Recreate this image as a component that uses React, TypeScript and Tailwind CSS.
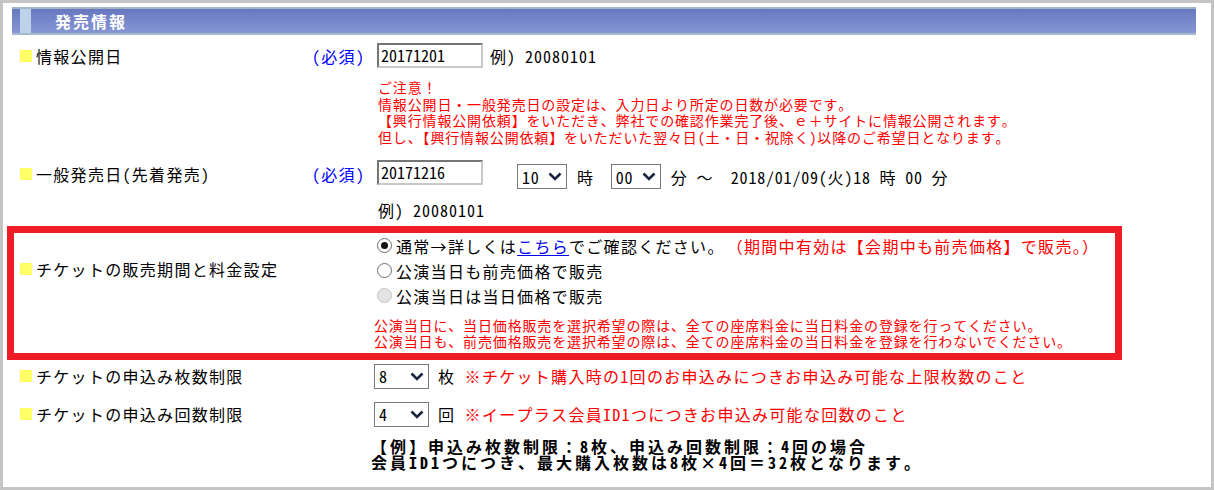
import React from "react";

function Sq() {
  return <span className="inline-block w-[12px] h-[12px] bg-[#ffff66] mr-[4px] shrink-0" />;
}

function Label({ text }: { text: string }) {
  return (
    <div className="flex items-center text-[16px] leading-[18px] tracking-[1.3px] text-black">
      <Sq />
      {text}
    </div>
  );
}

function DateInput({ value }: { value: string }) {
  return (
    <div className="w-[106px] h-[25px] border-2 border-t-[#767676] border-l-[#767676] border-b-[#c8c8c8] border-r-[#c8c8c8] bg-white px-[2px] text-[16px] leading-[20px] text-black">
      {value}
    </div>
  );
}

function Sel({ value, w }: { value: string; w: string }) {
  return (
    <div className={`${w} h-[25px] border border-[#7a7a7a] bg-white flex items-center justify-between pl-[4px] pr-[4px] text-[16px] leading-[20px]`}>
      <span>{value}</span>
      <svg width="14" height="9" viewBox="0 0 14 9">
        <path d="M1.5 1.5 L7 7 L12.5 1.5" fill="none" stroke="#1c2540" strokeWidth="2.6" />
      </svg>
    </div>
  );
}

function Radio({ state }: { state: "on" | "off" | "disabled" }) {
  if (state === "disabled") {
    return <span className="w-[15px] h-[15px] rounded-full border border-[#c4c4c4] bg-[#e3e3e3] shrink-0" />;
  }
  return (
    <span className="w-[15px] h-[15px] rounded-full border border-[#6e6e6e] bg-white flex items-center justify-center shrink-0">
      {state === "on" && <span className="w-[7px] h-[7px] rounded-full bg-[#111]" />}
    </span>
  );
}

export default function App() {
  return (
    <div className="w-[1214px] h-[490px] overflow-hidden bg-[#c4c4c4] p-[3px] font-['Noto_Sans_Mono_CJK_JP','Noto_Sans_CJK_JP',sans-serif] text-black">
      <div className="h-full bg-white pt-[4px]">
        {/* header */}
        <div className="ml-[9px] mr-[15px] h-[28px] border-t-2 border-t-[#a2b6c8] border-b-2 border-b-[#a6bacf] bg-linear-to-b from-[#6878c0] to-[#8696d4] flex items-center">
          <div className="ml-[8px] w-[11px] h-full bg-[#bdd3ea]" />
          <span className="ml-[24px] text-white font-bold text-[16px] tracking-[2px] leading-[20px]">発売情報</span>
        </div>

        {/* 情報公開日 */}
        <div className="pl-[17px] mt-[6px] flex h-[29px] items-center">
          <div className="w-[292px]">
            <Label text="情報公開日" />
          </div>
          <div className="w-[65px] text-[16px] tracking-[1.3px] text-[#0000ff]">(必須)</div>
          <DateInput value="20171201" />
          <span className="ml-[7px] text-[16px] tracking-[1px] whitespace-pre">例) 20080101</span>
        </div>
        <div className="pl-[375px] mt-[9px] text-[14px] tracking-[0.85px] leading-[16.6px] text-[#ff0000]">
          <div>ご注意！</div>
          <div>情報公開日・一般発売日の設定は、入力日より所定の日数が必要です。</div>
          <div>【興行情報公開依頼】をいただき、弊社での確認作業完了後、ｅ＋サイトに情報公開されます。</div>
          <div>但し、【興行情報公開依頼】をいただいた翌々日(土・日・祝除く)以降のご希望日となります。</div>
        </div>

        {/* 一般発売日 */}
        <div className="pl-[17px] mt-[15px] flex items-start">
          <div className="w-[292px] mt-[5px]">
            <Label text="一般発売日(先着発売)" />
          </div>
          <div className="w-[65px] mt-[5px] text-[16px] leading-[18px] tracking-[1.3px] text-[#0000ff]">(必須)</div>
          <DateInput value="20171216" />
          <div className="ml-[34px] mt-[4px] flex items-center text-[16px] tracking-[0.8px] whitespace-pre">
            <Sel value="10" w="w-[50px]" />
            <span className="ml-[10px]">時</span>
            <span className="ml-[17px]" />
            <Sel value="00" w="w-[50px]" />
            <span className="ml-[10px]">分 ～  2018/01/09(火)18 時 00 分</span>
          </div>
        </div>
        <div className="pl-[375px] mt-[12px] text-[16px] leading-[18px] tracking-[1px] whitespace-pre">例) 20080101</div>

        {/* 販売期間と料金設定 */}
        <div className="ml-[4px] w-[1115px] mt-[7px] border-[7px] border-[#ee1c25] pl-[6px] pb-[4px] flex">
          <div className="w-[357px] mt-[27px] self-start">
            <Label text="チケットの販売期間と料金設定" />
          </div>
          <div className="text-[16px] tracking-[1.3px]">
            <div className="h-[25px] flex items-center">
              <Radio state="on" />
              <span className="ml-[4px]">
                通常→詳しくは<span className="text-[#0000ee] underline underline-offset-2">こちら</span>でご確認ください。
                <span className="ml-[10px] text-[#ff0000]">（期間中有効は【会期中も前売価格】で販売。）</span>
              </span>
            </div>
            <div className="h-[25px] flex items-center">
              <Radio state="off" />
              <span className="ml-[4px]">公演当日も前売価格で販売</span>
            </div>
            <div className="h-[25px] flex items-center">
              <Radio state="disabled" />
              <span className="ml-[4px]">公演当日は当日価格で販売</span>
            </div>
            <div className="mt-[9px] -ml-[3px] text-[14px] tracking-[0.85px] leading-[16px] text-[#ff0000]">
              <div>公演当日に、当日価格販売を選択希望の際は、全ての座席料金に当日料金の登録を行ってください。</div>
              <div>公演当日も、前売価格販売を選択希望の際は、全ての座席料金の当日料金を登録を行わないでください。</div>
            </div>
          </div>
        </div>

        {/* 申込み枚数制限 */}
        <div className="pl-[17px] mt-[4px] flex h-[24px] items-center">
          <div className="w-[354px]">
            <Label text="チケットの申込み枚数制限" />
          </div>
          <Sel value="8" w="w-[55px]" />
          <span className="ml-[9px] text-[16px] tracking-[1.3px] whitespace-pre">
            枚 <span className="text-[#ff0000]">※チケット購入時の1回のお申込みにつきお申込み可能な上限枚数のこと</span>
          </span>
        </div>

        {/* 申込み回数制限 */}
        <div className="pl-[17px] mt-[14px] flex h-[24px] items-center">
          <div className="w-[354px]">
            <Label text="チケットの申込み回数制限" />
          </div>
          <Sel value="4" w="w-[55px]" />
          <span className="ml-[9px] text-[16px] tracking-[1.3px] whitespace-pre">
            回 <span className="text-[#ff0000]">※イープラス会員ID1つにつきお申込み可能な回数のこと</span>
          </span>
        </div>

        <div className="pl-[368px] mt-[12px] text-[16px] font-bold tracking-[3px] leading-[16px]">
          <div>【例】申込み枚数制限：8枚、申込み回数制限：4回の場合</div>
          <div>会員ID1つにつき、最大購入枚数は8枚×4回＝32枚となります。</div>
        </div>
      </div>
    </div>
  );
}
